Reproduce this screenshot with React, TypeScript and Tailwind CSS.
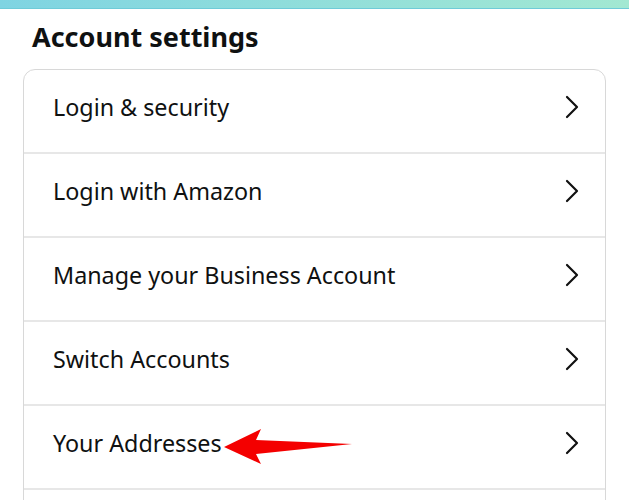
import React from 'react';

const items = [
  'Login & security',
  'Login with Amazon',
  'Manage your Business Account',
  'Switch Accounts',
  'Your Addresses',
  '',
];

const Chevron = () => (
  <svg width="16" height="24" viewBox="0 0 16 24" fill="none" stroke="#111" strokeWidth={2.2} strokeLinecap="round" strokeLinejoin="round">
    <path d="M3 2l10 10-10 10" />
  </svg>
);

const RedArrow = () => (
  <svg className="absolute left-[197px] top-[18px]" width="136" height="40" viewBox="0 0 136 40">
    <path d="M3 23 L40 5 L35 16 L131 20 L35 30 L40 40 Z" fill="#f40000" />
  </svg>
);

export default function App() {
  return (
    <div className="w-[629px] h-[500px] overflow-hidden bg-white" style={{ fontFamily: '"Noto Sans", "Open Sans", sans-serif' }}>
      <div className="h-[9px] bg-gradient-to-r from-[#7fd4e2] to-[#a2e8d2] border-b border-[#6fcbd8]" />
      <div className="px-[23px]">
        <h1 className="pl-[9px] pt-[8px] text-[27px] font-bold leading-[40px] text-[#0f1111]">Account settings</h1>
        <div className="mt-[12px] rounded-t-[12px] border border-[#d8d8d8]">
          {items.map((label, i) => (
            <div
              key={i}
              className="relative flex h-[84px] items-center justify-between border-b-2 border-[#e7e7e7] pb-[8px] pl-[29px] pr-[25px]"
            >
              {label && <span className="text-[23.3px] text-[#0f1111]">{label}</span>}
              {label && <Chevron />}
              {label === 'Your Addresses' && <RedArrow />}
            </div>
          ))}
        </div>
      </div>
    </div>
  );
}
